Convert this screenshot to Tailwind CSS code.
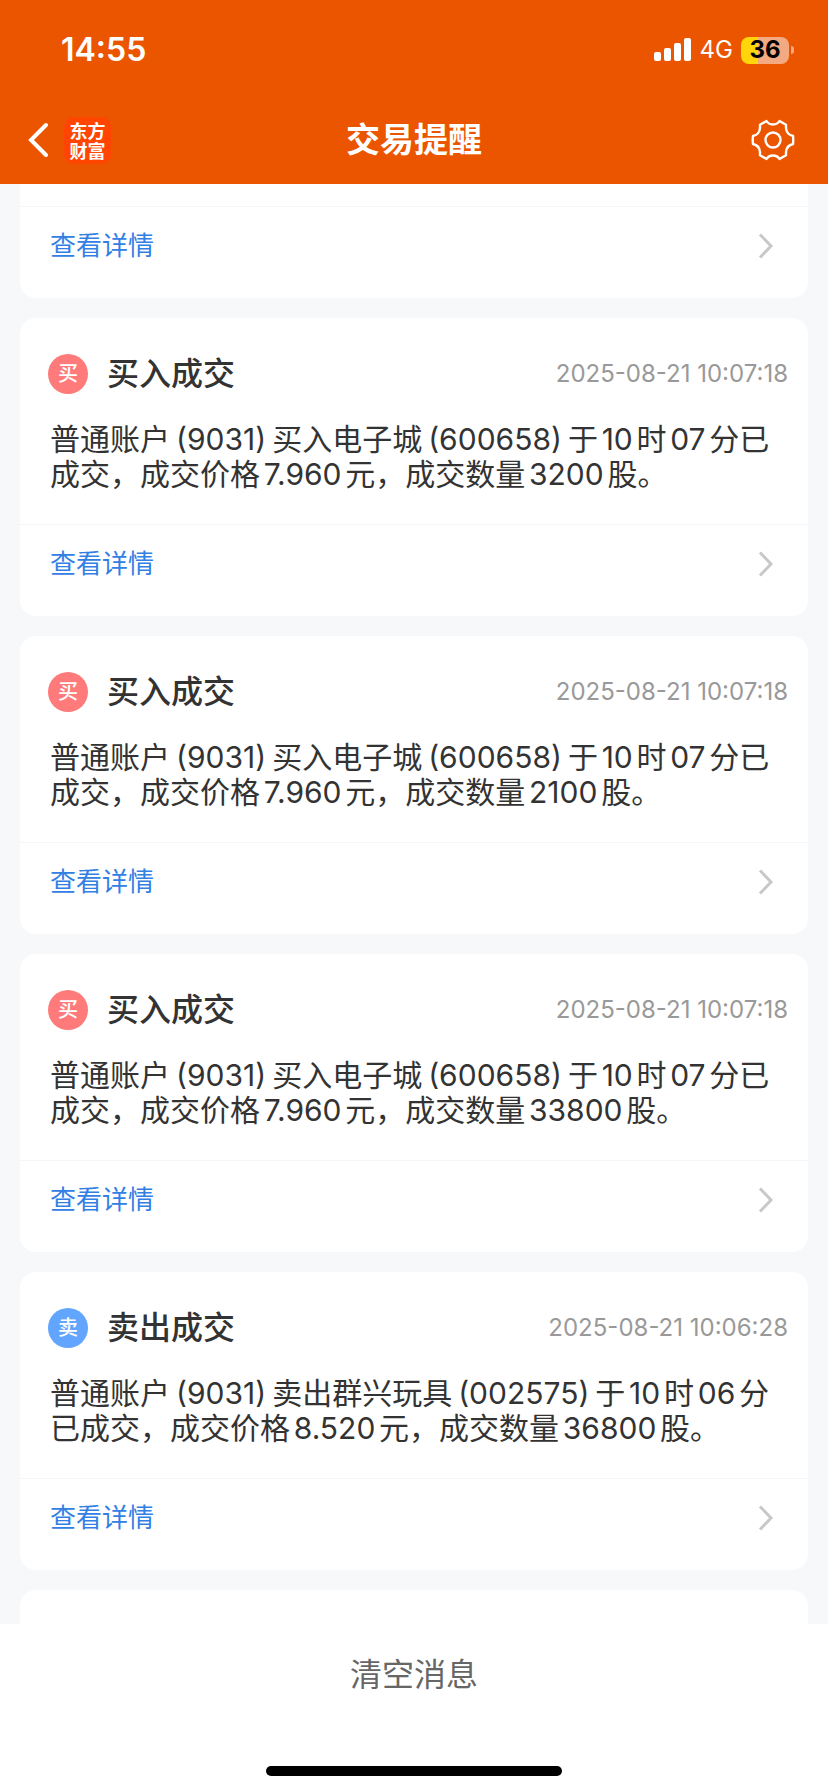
<!DOCTYPE html>
<html lang="zh-CN">
<head>
<meta charset="utf-8">
<meta name="viewport" content="width=device-width, initial-scale=1">
<title>交易提醒</title>
<script src="https://cdn.jsdelivr.net/npm/@tailwindcss/browser@4"></script>
</head>
<body class="flex min-h-screen flex-col bg-[#f6f8fa] font-[Inter,'Noto_Sans_CJK_SC',sans-serif] font-[390] text-[#333] [text-autospace:normal]">

<header class="bg-[#eb5500] text-white">
  <div class="flex h-24 items-center justify-between pt-1 pr-[34px] pl-[61px]">
    <time class="text-[32px] leading-10 font-semibold">14:55</time>
    <div class="flex items-center gap-2">
      <svg class="h-6 w-[38px]" viewBox="0 0 38 24" fill="currentColor" aria-hidden="true">
        <rect x="0" y="14" width="7" height="9" rx="2"/><rect x="10" y="10" width="7" height="13" rx="2"/><rect x="20" y="5" width="7" height="18" rx="2"/><rect x="30" y="0" width="7" height="23" rx="2"/>
      </svg>
      <span class="text-2xl font-normal">4G</span>
      <div class="flex items-center gap-0.5">
        <span class="flex h-[27px] w-12 items-center justify-center rounded-lg bg-linear-to-r from-[#ffd60a] from-35% to-[#f3a981] to-35% text-2xl font-bold text-black">36</span>
        <span class="h-2 w-[3px] rounded-r-full bg-[#f3a981]"></span>
      </div>
    </div>
  </div>
  <div class="grid h-22 grid-cols-[1fr_auto_1fr] items-center px-7">
    <div class="flex items-center gap-[14px]">
      <button type="button" aria-label="返回" class="w-[22px]">
        <svg class="h-9 w-[22px]" viewBox="0 0 22 36" fill="none" stroke="currentColor" stroke-width="4" stroke-linecap="round" aria-hidden="true"><path d="M18 3 3 18 18 33"/></svg>
      </button>
      <div class="flex size-[47px] flex-col items-center justify-center rounded-[10px] bg-[#ff4500] font-['Noto_Sans_CJK_SC',sans-serif] text-lg leading-5 font-bold"><span>东方</span><span>财富</span></div>
    </div>
    <h1 class="text-[34px] leading-10 font-bold">交易提醒</h1>
    <button type="button" aria-label="设置" class="mr-[5px] justify-self-end">
      <svg class="size-11" viewBox="0 0 44 44" fill="none" stroke="currentColor" stroke-width="2.400" stroke-linejoin="round" aria-hidden="true">
        <path d="M15.500 3Q17.500 6.500 22 6.500Q26.500 6.500 28.500 3L35 6.800V10Q35.500 16.500 42 18Q42.500 22 42 26Q35.500 27.500 35 34V37.200L28.500 41Q26.500 37.500 22 37.500Q17.500 37.500 15.500 41L9 37.200V34Q8.500 27.500 2 26Q1.500 22 2 18Q8.500 16.500 9 10V6.800Z"/><circle cx="22" cy="22" r="7.500"/>
      </svg>
    </button>
  </div>
</header>

<main class="flex flex-1 flex-col gap-5 px-5">
  <article class="rounded-b-2xl bg-white pt-[22px]">
    <a href="#" class="flex h-23 items-start justify-between border-t border-[#f5f6f7] pt-[19px] pr-[34px] pl-[30px] text-[26px] leading-10 text-[#3280e4]">查看详情
      <svg class="h-10 w-4" viewBox="0 0 16 40" fill="none" stroke="#c8c8c8" stroke-width="3" aria-hidden="true"><path d="M2 8.500 13 20 2 31.500"/></svg></a>
  </article>

  <article class="rounded-2xl bg-white">
    <div class="flex items-center pt-9 pr-5 pl-7">
      <span class="flex size-10 items-center justify-center rounded-full bg-[#ff7b7b] text-xl font-medium text-white">买</span>
      <h2 class="ml-[19px] text-[32px] leading-10 font-medium">买入成交</h2>
      <time class="ml-auto text-2xl leading-10 text-[#999]">2025-08-21 10:07:18</time>
    </div>
    <p class="pt-7 pr-8 pb-8 pl-[30px] text-[30px] leading-[35px]">普通账户<span class="mx-1.5">(9031)</span>买入电子城<span class="mx-1.5">(600658)</span>于10时07分已成交，成交价格7.960元，成交数量3200股。</p>
    <a href="#" class="flex h-23 items-start justify-between border-t border-[#f5f6f7] pt-[19px] pr-[34px] pl-[30px] text-[26px] leading-10 text-[#3280e4]">查看详情
      <svg class="h-10 w-4" viewBox="0 0 16 40" fill="none" stroke="#c8c8c8" stroke-width="3" aria-hidden="true"><path d="M2 8.500 13 20 2 31.500"/></svg></a>
  </article>

  <article class="rounded-2xl bg-white">
    <div class="flex items-center pt-9 pr-5 pl-7">
      <span class="flex size-10 items-center justify-center rounded-full bg-[#ff7b7b] text-xl font-medium text-white">买</span>
      <h2 class="ml-[19px] text-[32px] leading-10 font-medium">买入成交</h2>
      <time class="ml-auto text-2xl leading-10 text-[#999]">2025-08-21 10:07:18</time>
    </div>
    <p class="pt-7 pr-8 pb-8 pl-[30px] text-[30px] leading-[35px]">普通账户<span class="mx-1.5">(9031)</span>买入电子城<span class="mx-1.5">(600658)</span>于10时07分已成交，成交价格7.960元，成交数量2100股。</p>
    <a href="#" class="flex h-23 items-start justify-between border-t border-[#f5f6f7] pt-[19px] pr-[34px] pl-[30px] text-[26px] leading-10 text-[#3280e4]">查看详情
      <svg class="h-10 w-4" viewBox="0 0 16 40" fill="none" stroke="#c8c8c8" stroke-width="3" aria-hidden="true"><path d="M2 8.500 13 20 2 31.500"/></svg></a>
  </article>

  <article class="rounded-2xl bg-white">
    <div class="flex items-center pt-9 pr-5 pl-7">
      <span class="flex size-10 items-center justify-center rounded-full bg-[#ff7b7b] text-xl font-medium text-white">买</span>
      <h2 class="ml-[19px] text-[32px] leading-10 font-medium">买入成交</h2>
      <time class="ml-auto text-2xl leading-10 text-[#999]">2025-08-21 10:07:18</time>
    </div>
    <p class="pt-7 pr-8 pb-8 pl-[30px] text-[30px] leading-[35px]">普通账户<span class="mx-1.5">(9031)</span>买入电子城<span class="mx-1.5">(600658)</span>于10时07分已成交，成交价格7.960元，成交数量33800股。</p>
    <a href="#" class="flex h-23 items-start justify-between border-t border-[#f5f6f7] pt-[19px] pr-[34px] pl-[30px] text-[26px] leading-10 text-[#3280e4]">查看详情
      <svg class="h-10 w-4" viewBox="0 0 16 40" fill="none" stroke="#c8c8c8" stroke-width="3" aria-hidden="true"><path d="M2 8.500 13 20 2 31.500"/></svg></a>
  </article>

  <article class="rounded-2xl bg-white">
    <div class="flex items-center pt-9 pr-5 pl-7">
      <span class="flex size-10 items-center justify-center rounded-full bg-[#62a5ff] text-xl font-medium text-white">卖</span>
      <h2 class="ml-[19px] text-[32px] leading-10 font-medium">卖出成交</h2>
      <time class="ml-auto text-2xl leading-10 text-[#999]">2025-08-21 10:06:28</time>
    </div>
    <p class="pt-7 pr-8 pb-8 pl-[30px] text-[30px] leading-[35px]">普通账户<span class="mx-1.5">(9031)</span>卖出群兴玩具<span class="mx-1.5">(002575)</span>于10时06分已成交，成交价格8.520元，成交数量36800股。</p>
    <a href="#" class="flex h-23 items-start justify-between border-t border-[#f5f6f7] pt-[19px] pr-[34px] pl-[30px] text-[26px] leading-10 text-[#3280e4]">查看详情
      <svg class="h-10 w-4" viewBox="0 0 16 40" fill="none" stroke="#c8c8c8" stroke-width="3" aria-hidden="true"><path d="M2 8.500 13 20 2 31.500"/></svg></a>
  </article>

  <article class="min-h-8 flex-1 rounded-t-2xl bg-white"></article>
</main>

<footer class="flex flex-col items-center bg-white pb-4">
  <button type="button" class="h-[102px] w-full text-[32px] text-[#666]">清空消息</button>
  <div class="mt-10 h-[10px] w-[296px] rounded-full bg-black"></div>
</footer>
</body>
</html>
